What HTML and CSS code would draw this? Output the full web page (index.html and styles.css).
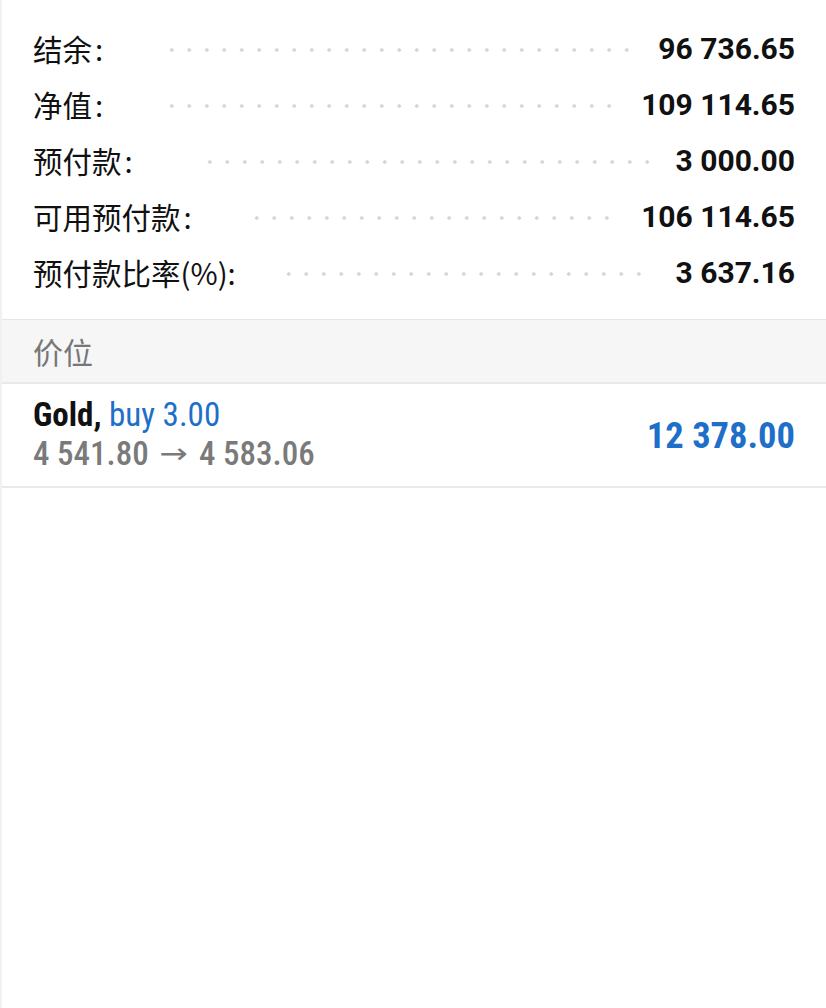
FILE: index.html
```html
<!DOCTYPE html>
<html lang="zh">
<head>
<meta charset="utf-8">
<link rel="stylesheet" href="styles.css">
</head>
<body>
<div class="page">
  <section class="summary">
    <div class="row"><span class="label">结余<span class="colon">:</span></span><span class="leader l1"></span><span class="value">96 736.65</span></div>
    <div class="row"><span class="label">净值<span class="colon">:</span></span><span class="leader l1"></span><span class="value">109 114.65</span></div>
    <div class="row"><span class="label">预付款<span class="colon">:</span></span><span class="leader l3"></span><span class="value">3 000.00</span></div>
    <div class="row"><span class="label">可用预付款<span class="colon">:</span></span><span class="leader l4"></span><span class="value">106 114.65</span></div>
    <div class="row"><span class="label">预付款比率(%):</span><span class="leader l5"></span><span class="value">3 637.16</span></div>
  </section>
  <div class="section-head">价位</div>
  <div class="position">
    <div class="pos-info">
      <div class="pos-title"><span class="sym">Gold,</span> <span class="side">buy 3.00</span></div>
      <div class="pos-prices">4 541.80<span class="arrow">→</span>4 583.06</div>
    </div>
    <div class="pos-profit">12 378.00</div>
  </div>
</div>
</body>
</html>
```
FILE: styles.css
```css
html, body {
  margin: 0;
  padding: 0;
  background: #fff;
}
.page {
  min-height: 1008px;
  border-left: 2px solid #f1f1f1;
  box-sizing: border-box;
}
.summary {
  padding: 20px 31px 19px 31px;
}
.row {
  display: flex;
  align-items: center;
  height: 56px;
}
.label {
  font-family: "Noto Sans CJK SC", "Noto Sans", sans-serif;
  font-size: 29.5px;
  color: #111;
  white-space: nowrap;
}
.colon {
  margin-left: 3px;
}
.leader {
  flex: 1;
  height: 4px;
  margin: 4px 27px 0 60px;
  background-image: radial-gradient(circle, #d6d6d6 1.5px, transparent 2px);
  background-size: 17.5px 4px;
  background-repeat: repeat-x;
}
.l3 { margin-left: 68px; }
.l4 { margin-left: 56px; }
.l5 { margin-left: 44px; }
.value {
  font-family: Roboto, "Liberation Sans", sans-serif;
  font-weight: 700;
  font-size: 30px;
  color: #111;
  white-space: nowrap;
}
.section-head {
  height: 62px;
  background: #f6f6f6;
  border-top: 1px solid #e6e6e6;
  border-bottom: 2px solid #e9e9e9;
  display: flex;
  align-items: center;
  padding-left: 31px;
  font-family: "Noto Sans CJK SC", "Noto Sans", sans-serif;
  font-size: 30px;
  color: #777;
}
.position {
  display: flex;
  align-items: center;
  justify-content: space-between;
  height: 102px;
  padding: 0 31px;
  border-bottom: 2px solid #e9e9e9;
}
.pos-info {
  font-family: "Roboto Condensed", Roboto, sans-serif;
  font-stretch: condensed;
  font-size: 33px;
  line-height: 39px;
}
.pos-title {
  margin-top: -2px;
}
.sym {
  font-weight: 700;
  color: #111;
}
.side {
  color: #1e6fc8;
}
.pos-prices {
  font-weight: 500;
  color: #7a7a7a;
  white-space: nowrap;
}
.arrow {
  display: inline-block;
  font-family: "DejaVu Sans", sans-serif;
  font-weight: 400;
  font-size: 28px;
  line-height: 24px;
  vertical-align: 2px;
  transform: scaleX(1.35);
  margin: 0 15px 0 14px;
}
.pos-profit {
  font-family: "Roboto Condensed", Roboto, sans-serif;
  font-stretch: condensed;
  font-weight: 700;
  font-size: 36.5px;
  color: #1e6fc8;
}
```
